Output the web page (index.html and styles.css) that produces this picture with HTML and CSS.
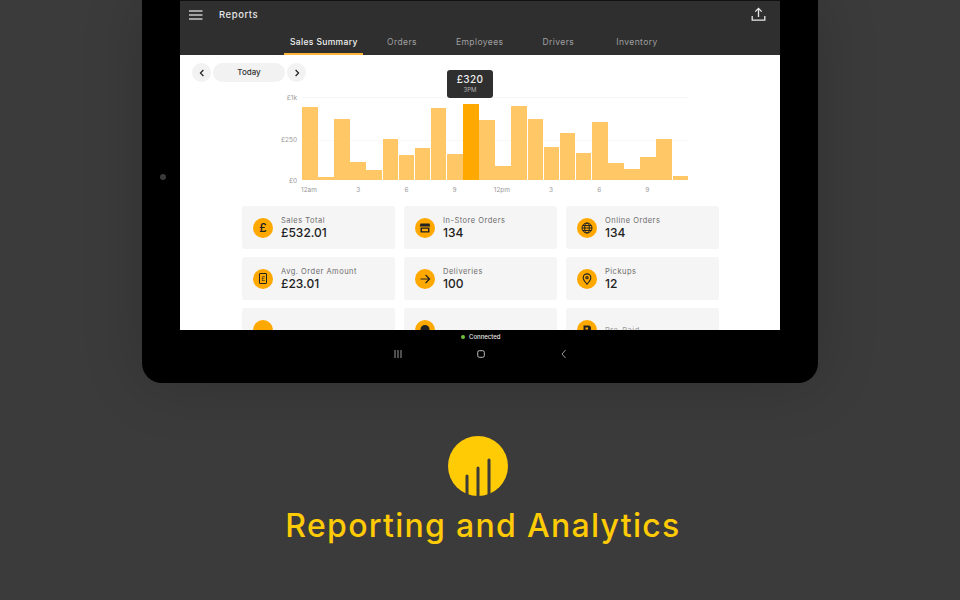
FILE: index.html
```html
<!DOCTYPE html>
<html lang="en">

<head>
    <meta charset="UTF-8">
    <title>Reporting and Analytics</title>
    <link rel="stylesheet" href="styles.css">
</head>

<body>
    <div class="tablet">
        <div class="camera"></div>
        <div class="screen">
            <div class="appbar">
                <div class="appbar-top">
                    <svg class="menu-icon" width="14" height="10" viewBox="0 0 14 10"><path d="M0 1h13.5M0 5h13.5M0 9h13.5" stroke="#c8c8c8" stroke-width="1.3" fill="none"/></svg>
                    <span class="title">Reports</span>
                    <svg class="share-icon" width="15" height="15" viewBox="0 0 15 15" fill="none" stroke="#e8e8e8" stroke-width="1.3"><path d="M7.5 10V1.5M4.3 4.6l3.2-3.2 3.2 3.2M1.2 9v4.2h12.6V9"/></svg>
                </div>
                <div class="tabs">
                    <span class="tab tab-active">Sales Summary</span>
                    <span class="tab tab-orders">Orders</span>
                    <span class="tab">Employees</span>
                    <span class="tab">Drivers</span>
                    <span class="tab tab-inventory">Inventory</span>
                </div>
            </div>

            <div class="content">
                <div class="date-row">
                    <span class="round-btn"><svg width="8" height="8" viewBox="0 0 8 8"><path d="M5.4 1L2.4 4l3 3" stroke="#222" stroke-width="1.2" fill="none"/></svg></span>
                    <span class="today">Today</span>
                    <span class="round-btn"><svg width="8" height="8" viewBox="0 0 8 8"><path d="M2.6 1l3 3-3 3" stroke="#222" stroke-width="1.2" fill="none"/></svg></span>
                </div>

                <div class="chart">
                    <div class="tooltip">
                        <div class="tooltip-value">£320</div>
                        <div class="tooltip-label">3PM</div>
                    </div>
                    <div class="y-axis">
                        <span>£1k</span>
                        <span>£250</span>
                        <span>£0</span>
                    </div>
                    <div class="plot">
                        <div class="bar" style="height:73px"></div>
                        <div class="bar" style="height:3px"></div>
                        <div class="bar" style="height:61px"></div>
                        <div class="bar" style="height:18px"></div>
                        <div class="bar" style="height:10px"></div>
                        <div class="bar" style="height:41px"></div>
                        <div class="bar" style="height:25px"></div>
                        <div class="bar" style="height:32px"></div>
                        <div class="bar" style="height:72px"></div>
                        <div class="bar" style="height:26px"></div>
                        <div class="bar bar-active" style="height:76px"></div>
                        <div class="bar" style="height:60px"></div>
                        <div class="bar" style="height:14px"></div>
                        <div class="bar" style="height:74px"></div>
                        <div class="bar" style="height:61px"></div>
                        <div class="bar" style="height:33px"></div>
                        <div class="bar" style="height:47px"></div>
                        <div class="bar" style="height:27px"></div>
                        <div class="bar" style="height:58px"></div>
                        <div class="bar" style="height:17px"></div>
                        <div class="bar" style="height:11px"></div>
                        <div class="bar" style="height:23px"></div>
                        <div class="bar" style="height:41px"></div>
                        <div class="bar" style="height:4px"></div>
                    </div>
                    <div class="x-axis">
                        <span>12am</span>
                        <span>3</span>
                        <span>6</span>
                        <span>9</span>
                        <span>12pm</span>
                        <span>3</span>
                        <span>6</span>
                        <span>9</span>
                    </div>
                </div>

                <div class="cards">
                    <div class="card">
                        <span class="card-icon"><span class="pound">£</span></span>
                        <div>
                            <div class="card-label">Sales Total</div>
                            <div class="card-value">£532.01</div>
                        </div>
                    </div>
                    <div class="card">
                        <span class="card-icon"><svg width="12" height="12" viewBox="0 0 12 12"><path d="M1.5 1.5h9l.8 3H.7z M1.5 5.5h9v5h-9z" fill="#222"/><path d="M3 6.8h6v2.4H3z" fill="#ffa800"/></svg></span>
                        <div>
                            <div class="card-label">In-Store Orders</div>
                            <div class="card-value">134</div>
                        </div>
                    </div>
                    <div class="card">
                        <span class="card-icon"><svg width="12" height="12" viewBox="0 0 12 12" fill="none" stroke="#222" stroke-width="1"><circle cx="6" cy="6" r="5"/><ellipse cx="6" cy="6" rx="2.3" ry="5"/><path d="M1 6h10M1.7 3.5h8.6M1.7 8.5h8.6"/></svg></span>
                        <div>
                            <div class="card-label">Online Orders</div>
                            <div class="card-value">134</div>
                        </div>
                    </div>
                    <div class="card">
                        <span class="card-icon"><span class="receipt">£</span></span>
                        <div>
                            <div class="card-label">Avg. Order Amount</div>
                            <div class="card-value">£23.01</div>
                        </div>
                    </div>
                    <div class="card">
                        <span class="card-icon"><svg width="12" height="12" viewBox="0 0 12 12" fill="none" stroke="#222" stroke-width="1.2"><path d="M1.5 6h9M6.6 2l4 4-4 4"/></svg></span>
                        <div>
                            <div class="card-label">Deliveries</div>
                            <div class="card-value">100</div>
                        </div>
                    </div>
                    <div class="card">
                        <span class="card-icon"><svg width="12" height="12" viewBox="0 0 12 12" fill="none" stroke="#222" stroke-width="1.1"><path d="M6 11.2C4 8.8 2.2 6.9 2.2 4.7a3.8 3.8 0 0 1 7.6 0c0 2.2-1.8 4.1-3.8 6.5z"/><circle cx="6" cy="4.7" r="1.1"/></svg></span>
                        <div>
                            <div class="card-label">Pickups</div>
                            <div class="card-value">12</div>
                        </div>
                    </div>
                    <div class="card">
                        <span class="card-icon"></span>
                    </div>
                    <div class="card">
                        <span class="card-icon"><svg width="12" height="12" viewBox="0 0 12 12"><path d="M1.5 5a4.5 4 0 0 1 9 0v6h-9z" fill="#222"/></svg></span>
                    </div>
                    <div class="card">
                        <span class="card-icon"><svg width="12" height="12" viewBox="0 0 12 12"><path d="M2.5 1.5h5a2.5 2.5 0 0 1 2.5 2.5v7h-7.500z" fill="#222"/><path d="M4.500 3.500h2.500v2h-2.500z" fill="#ffa800"/></svg></span>
                        <div class="card-label card-label-clipped">Pre-Paid</div>
                    </div>
                </div>
            </div>
        </div>

        <div class="status"><span class="status-dot"></span>Connected</div>
        <div class="navbar">
            <svg width="8" height="8" viewBox="0 0 8 8"><path d="M1 0v8M4 0v8M7 0v8" stroke="#9a9a9a" stroke-width="1"/></svg>
            <svg width="8" height="8" viewBox="0 0 8 8"><rect x=".7" y=".7" width="6.6" height="6.6" rx="1.6" fill="none" stroke="#bdbdbd" stroke-width="1"/></svg>
            <svg width="8" height="10" viewBox="0 0 8 10"><path d="M5.500 1L2 5l3.500 4" fill="none" stroke="#9a9a9a" stroke-width="1"/></svg>
        </div>
    </div>

    <div class="promo">
        <svg class="promo-logo" width="60" height="60" viewBox="0 0 60 60">
            <circle cx="30" cy="30" r="30" fill="#ffcb05"/>
            <path d="M19 58V40M30 60V32M41 58V24" stroke="#3b3b3b" stroke-width="3" stroke-linecap="round"/>
        </svg>
        <h1>Reporting and Analytics</h1>
    </div>
</body>

</html>
```

FILE: styles.css
```css
* {
    box-sizing: border-box;
}

html,
body {
    height: 100%;
}

body {
    margin: 0;
    width: 960px;
    height: 600px;
    overflow: hidden;
    background-color: #3b3b3b;
    font-family: Inter, "Liberation Sans", sans-serif;
}

.tablet {
    position: relative;
    width: 676px;
    height: 383px;
    margin: 0 auto;
    padding: 0 38px;
    background-color: #000;
    border-radius: 0 0 20px 20px;
    box-shadow: 0 0 60px rgba(0, 0, 0, 0.18);
}

.camera {
    position: absolute;
    left: 18px;
    top: 174px;
    width: 6px;
    height: 6px;
    border-radius: 50%;
    background-color: #3a3a3a;
}

.screen {
    height: 330px;
    overflow: hidden;
    background-color: #fff;
}

.appbar {
    height: 55px;
    border-top: 1px solid #111;
    background-color: #2f2f2f;
}

.appbar-top {
    display: flex;
    align-items: center;
    height: 27px;
    padding: 0 14px 0 9px;
}

.title {
    margin-left: 16px;
    font-size: 9.5px;
    font-weight: 500;
    color: #e6e6e6;
    letter-spacing: 0.55px;
}

.share-icon {
    margin-left: auto;
}

.tabs {
    display: flex;
    gap: 39px;
    height: 27px;
    padding-left: 104px;
}

.tab {
    height: 27px;
    line-height: 28px;
    font-size: 8.5px;
    color: #a0a0a0;
    letter-spacing: 0.42px;
    white-space: nowrap;
}

.tab-active {
    width: 79px;
    padding-left: 6px;
    font-weight: 500;
    letter-spacing: 0.35px;
    color: #f2f2f2;
    border-bottom: 2px solid #ffb43a;
}

.tab-orders {
    margin-left: -15px;
}

.tab-inventory {
    margin-left: 3px;
}

.content {
    padding: 8px 61px 0 62px;
}

.date-row {
    display: flex;
    align-items: center;
    gap: 2px;
    margin-left: -50px;
    height: 19px;
}

.round-btn {
    display: flex;
    align-items: center;
    justify-content: center;
    width: 19px;
    height: 19px;
    border-radius: 50%;
    background-color: #f2f2f2;
}

.today {
    width: 72px;
    height: 19px;
    line-height: 19px;
    text-align: center;
    font-size: 8px;
    font-weight: 500;
    color: #333;
    background-color: #f2f2f2;
    border-radius: 10px;
}

.chart {
    position: relative;
    display: grid;
    grid-template-columns: 60px 386px;
    grid-template-rows: 83px auto;
    height: 115px;
    padding-top: 15px;
}

.tooltip {
    position: absolute;
    left: 205px;
    top: -12px;
    z-index: 2;
    width: 46px;
    height: 28px;
    padding-top: 4px;
    text-align: center;
    background-color: #2f2f2f;
    border-radius: 3px;
}

.tooltip-value {
    font-size: 10px;
    line-height: 11px;
    font-weight: 500;
    color: #f0f0f0;
    letter-spacing: 0.3px;
}

.tooltip-label {
    margin-top: 1px;
    font-size: 6px;
    line-height: 8px;
    color: #b0b0b0;
}

.y-axis {
    display: flex;
    flex-direction: column;
    justify-content: space-between;
    align-items: flex-end;
    height: 91px;
    margin-top: -3px;
    padding-right: 5px;
    font-size: 6.5px;
    line-height: 8px;
    color: #999;
}

.plot {
    display: flex;
    align-items: flex-end;
    gap: 0.5px;
    border-top: 1px solid #f6f6f6;
    background: linear-gradient(#f8f8f8, #f8f8f8) 0 42px / 100% 1px no-repeat;
}

.bar {
    flex: 1;
    background-color: #ffc766;
}

.bar-active {
    background-color: #ffa800;
}

.x-axis {
    grid-column: 2;
    display: grid;
    grid-template-columns: repeat(8, 48.2px);
    margin-top: 6px;
    font-size: 6.5px;
    line-height: 8px;
    color: #999;
}

.x-axis span:nth-child(1),
.x-axis span:nth-child(5) {
    margin-left: -1px;
}

.x-axis span:not(:nth-child(1)):not(:nth-child(5)) {
    padding-left: 6px;
}

.cards {
    display: grid;
    grid-template-columns: repeat(3, 153px);
    grid-auto-rows: 43px;
    gap: 8px 9px;
    margin-top: 9px;
}

.card {
    display: flex;
    align-items: center;
    gap: 8px;
    padding-left: 11px;
    background-color: #f5f5f5;
    border-radius: 3px;
}

.card-icon {
    flex: none;
    display: flex;
    align-items: center;
    justify-content: center;
    width: 20px;
    height: 20px;
    border-radius: 50%;
    background-color: #ffa800;
}

.pound {
    font-size: 12px;
    font-weight: 500;
    color: #222;
}

.receipt {
    width: 8px;
    height: 11px;
    font-size: 6px;
    line-height: 9px;
    text-align: center;
    color: #222;
    border: 1px solid #222;
    border-radius: 1px;
}

.card-label {
    padding-top: 1px;
    font-size: 7.5px;
    line-height: 10px;
    color: #6c6c6c;
    letter-spacing: 0.5px;
}

.card-label-clipped {
    padding-top: 3px;
    color: #999;
}

.card-value {
    font-size: 12px;
    line-height: 14px;
    font-weight: 500;
    color: #222;
    letter-spacing: 0;
}

.status {
    position: absolute;
    left: 319px;
    top: 333px;
    display: flex;
    align-items: center;
    gap: 4px;
    font-size: 6px;
    line-height: 8px;
    font-weight: 500;
    color: #e8e8e8;
}

.status-dot {
    width: 4px;
    height: 4px;
    border-radius: 50%;
    background-color: #6fbf3a;
}

.navbar {
    position: absolute;
    left: 252px;
    top: 349px;
    display: flex;
    align-items: center;
    gap: 75px;
}

.promo {
    display: flex;
    flex-direction: column;
    align-items: center;
    margin-top: 53px;
}

.promo-logo {
    display: block;
    margin-left: -4px;
}

.promo h1 {
    margin: 8px 0 0 6px;
    font-size: 32px;
    line-height: 44px;
    font-weight: 500;
    color: #ffcb05;
    letter-spacing: 1.3px;
}
```
